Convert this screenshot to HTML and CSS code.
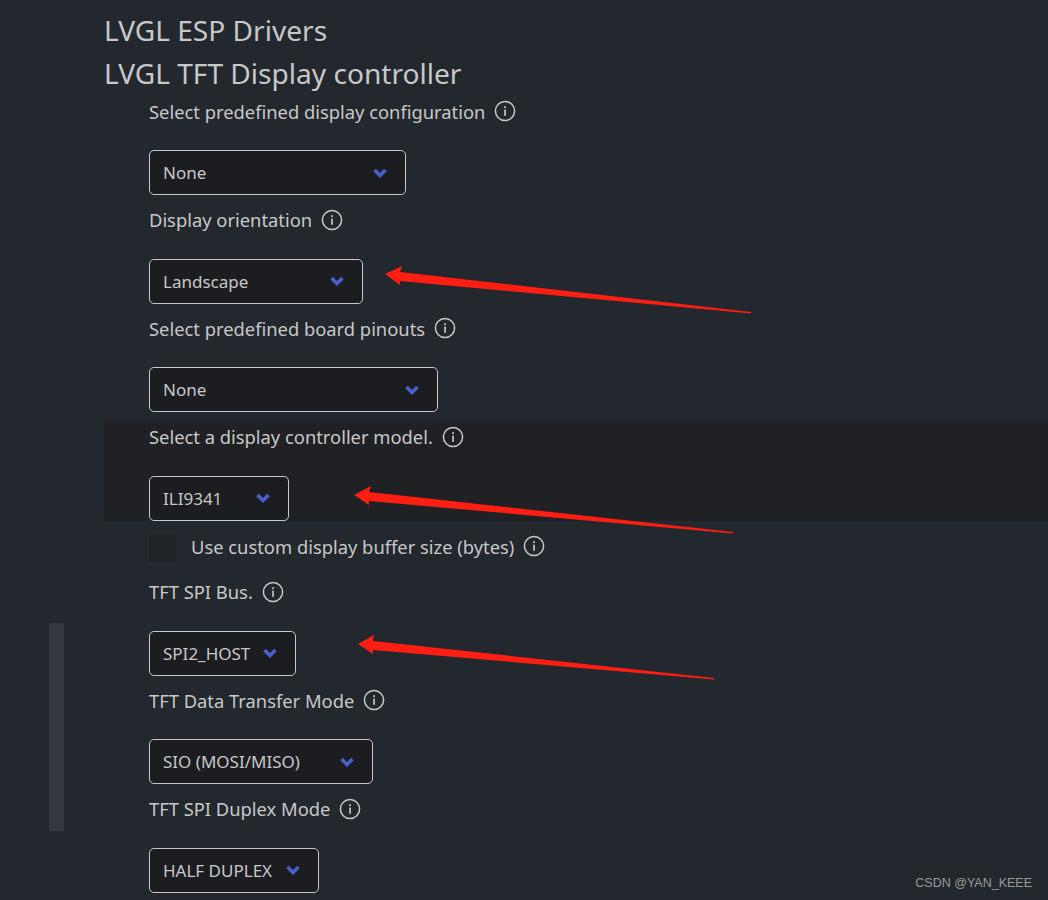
FILE: index.html
```html
<!DOCTYPE html>
<html lang="en">
<head>
  <meta charset="UTF-8">
  <title>LVGL TFT Display controller</title>
  <link rel="stylesheet" href="styles.css">
</head>
<body>
  <svg width="0" height="0" class="defs">
    <symbol id="info" viewBox="0 0 22 22">
      <circle cx="11" cy="11" r="9.6" fill="none" stroke="currentColor" stroke-width="1.5"/>
      <rect x="10.2" y="9.6" width="1.7" height="6.2" fill="currentColor"/>
      <rect x="10.2" y="6.2" width="1.7" height="1.9" fill="currentColor"/>
    </symbol>
    <symbol id="chevron" viewBox="0 0 14 10">
      <path d="M1.5 2 L7 7.5 L12.5 2" fill="none" stroke="currentColor" stroke-width="3.6"/>
    </symbol>
  </svg>

  <div class="scrollbar"></div>

  <main class="content">
    <h2>LVGL ESP Drivers</h2>
    <h2>LVGL TFT Display controller</h2>

    <div class="field">
      <div class="label">Select predefined display configuration <svg class="info"><use href="#info"/></svg></div>
      <div class="select w-config"><span>None</span><svg class="chevron"><use href="#chevron"/></svg></div>
    </div>

    <div class="field">
      <div class="label">Display orientation <svg class="info"><use href="#info"/></svg></div>
      <div class="select w-orient"><span>Landscape</span><svg class="chevron"><use href="#chevron"/></svg></div>
    </div>

    <div class="field">
      <div class="label">Select predefined board pinouts <svg class="info"><use href="#info"/></svg></div>
      <div class="select w-board"><span>None</span><svg class="chevron"><use href="#chevron"/></svg></div>
    </div>

    <div class="field hovered">
      <div class="label">Select a display controller model. <svg class="info"><use href="#info"/></svg></div>
      <div class="select w-model"><span>ILI9341</span><svg class="chevron"><use href="#chevron"/></svg></div>
    </div>

    <div class="check-row">
      <div class="checkbox"></div>
      <div class="label">Use custom display buffer size (bytes) <svg class="info"><use href="#info"/></svg></div>
    </div>

    <div class="field first-after-check">
      <div class="label">TFT SPI Bus. <svg class="info"><use href="#info"/></svg></div>
      <div class="select w-bus"><span>SPI2_HOST</span><svg class="chevron"><use href="#chevron"/></svg></div>
    </div>

    <div class="field">
      <div class="label">TFT Data Transfer Mode <svg class="info"><use href="#info"/></svg></div>
      <div class="select w-transfer"><span>SIO (MOSI/MISO)</span><svg class="chevron"><use href="#chevron"/></svg></div>
    </div>

    <div class="field">
      <div class="label">TFT SPI Duplex Mode <svg class="info"><use href="#info"/></svg></div>
      <div class="select w-duplex"><span>HALF DUPLEX</span><svg class="chevron"><use href="#chevron"/></svg></div>
    </div>
  </main>

  <!-- red arrows drawn over the screenshot -->
  <svg class="arrows" width="1048" height="900" viewBox="0 0 1048 900">
    <polygon points="385,274 402,266 400,272 751,312 751,313.5 400,281 400,285"/>
    <polygon points="354,495 371,486 369,492 733,532 733,533.5 369,501 369,505"/>
    <polygon points="358,644 374,635 373,641 714,678 714,679.5 373,650 373,654"/>
  </svg>

  <div class="watermark">CSDN @YAN_KEEE</div>
</body>
</html>
```

FILE: styles.css
```css
html, body {
  margin: 0;
  padding: 0;
}
body {
  position: relative;
  width: 1048px;
  height: 900px;
  overflow: hidden;
  background-color: #23272e;
  color: #c8c8c8;
  font-family: "Noto Sans", "Open Sans", sans-serif;
}
.defs {
  position: absolute;
}
.content {
  padding: 9px 0 0 104px;
}
h2 {
  margin: 0;
  font-size: 28.1px;
  font-weight: 400;
  line-height: 43px;
}
.field {
  box-sizing: border-box;
  height: 99px;
  margin-top: 9.67px;
  padding-left: 45px;
}
h2 + .field {
  margin-top: 1px;
}
.label {
  display: flex;
  align-items: center;
  gap: 9px;
  height: 30px;
  font-size: 18.35px;
}
.info {
  width: 22px;
  height: 22px;
}
.select {
  box-sizing: border-box;
  display: flex;
  justify-content: space-between;
  align-items: center;
  height: 45px;
  margin-top: 24px;
  padding: 0 18px 0 13px;
  background-color: #1c1d21;
  border: 1px solid #c8c8c8;
  border-radius: 5px;
  font-size: 17px;
}
.chevron {
  width: 14px;
  height: 10px;
  color: #4a5fc9;
}
.w-config { width: 257px; }
.w-orient { width: 214px; }
.w-board { width: 289px; }
.w-model { width: 140px; }
.w-bus { width: 147px; }
.w-transfer { width: 224px; }
.w-duplex { width: 170px; }
.hovered {
  background-color: #1f2125;
}
.check-row {
  display: flex;
  align-items: center;
  gap: 15px;
  height: 28px;
  margin: 14px 0 0 45px;
}
.check-row .label {
  margin-bottom: 5px;
}
.checkbox {
  width: 27px;
  height: 27px;
  border-radius: 4px;
  background-color: #1f2226;
}
.first-after-check {
  margin-top: 13.65px;
}
.scrollbar {
  position: absolute;
  left: 49px;
  top: 623px;
  width: 15px;
  height: 208px;
  background-color: #33373f;
}
.arrows {
  position: absolute;
  left: 0;
  top: 0;
}
.arrows polygon {
  fill: #ff1f12;
}
.watermark {
  position: absolute;
  right: 16px;
  top: 876px;
  font-family: "Liberation Sans", sans-serif;
  font-size: 12.5px;
  color: #9a9a9a;
}
```
